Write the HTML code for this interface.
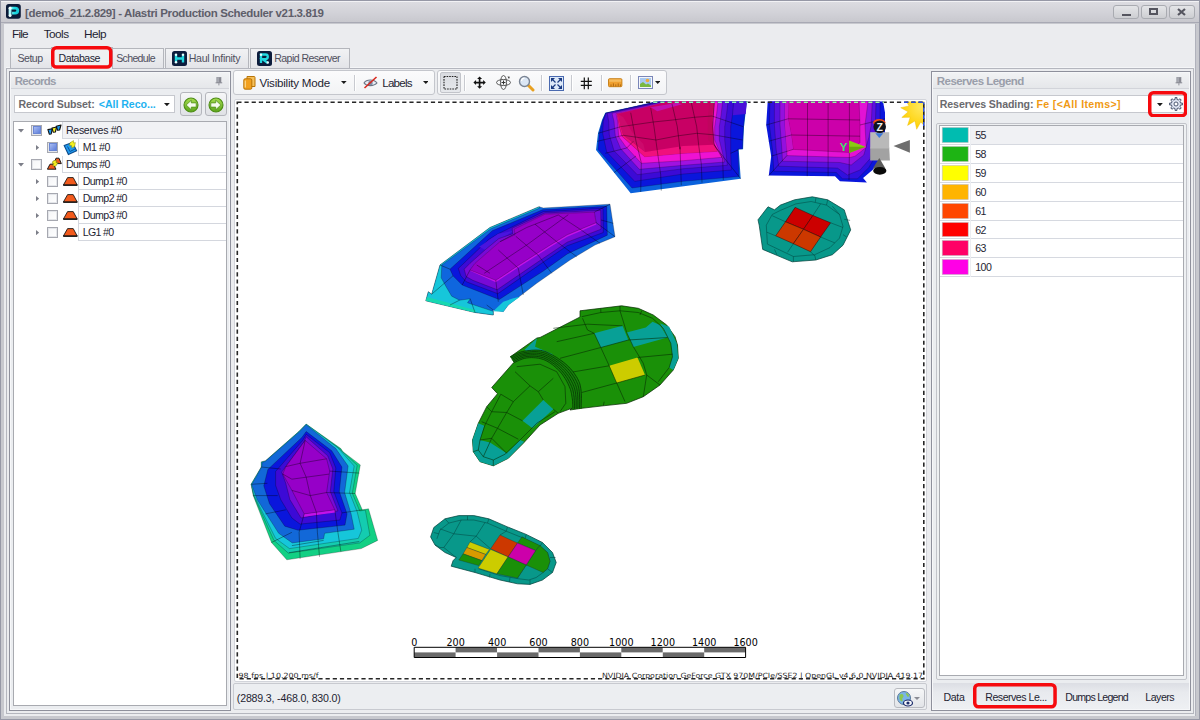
<!DOCTYPE html>
<html lang="en"><head><meta charset="utf-8"><title>Alastri Production Scheduler</title>
<style>
*{box-sizing:border-box;margin:0;padding:0}
html,body{width:1200px;height:720px;overflow:hidden}
body{position:relative;background:#e9ebee;font-family:"Liberation Sans","DejaVu Sans",sans-serif;font-size:11px;color:#1e1e32}
.abs{position:absolute}
#win{position:absolute;left:0;top:0;width:1200px;height:720px;background:#c7c8ce;border:1px solid #9698a6}
#title{position:absolute;left:1px;top:1px;width:1198px;height:22px;background:linear-gradient(#f2f2f5 0,#f2f2f5 1px,#dcdce1 1px,#d2d2d8 55%,#c8c8ce);border-bottom:1px solid #a8a9b4}
#title .t{position:absolute;left:25px;top:4px;font-weight:bold;font-size:11.5px;color:#5e5e6a;letter-spacing:-0.1px;white-space:nowrap}
.wb{position:absolute;top:5px;width:26px;height:14px;border:1px solid #a9abb1;border-radius:3px;background:linear-gradient(#e4e5e8,#cdced2)}
#client{position:absolute;left:4px;top:24px;width:1192px;height:692px;background:#ebecef;border-right:1px solid #b0b2bc}
.menu{position:absolute;top:27px;font-size:12.5px;color:#1e1e32;white-space:nowrap}
.tab{position:absolute;top:48px;height:20px;border:1px solid #b4b6bc;border-bottom:none;background:linear-gradient(#f1f2f4,#e3e4e8);font-size:11px;color:#4a4a5a;white-space:nowrap;letter-spacing:-0.2px}
.tab span{position:absolute;top:4px}
.tab.sel{background:#eef0f2;color:#1e1e32;top:47px;height:22px}
.redbox{position:absolute;border:3px solid #ee0a14;border-radius:6px}
.panel{position:absolute;background:#eceef1;border:1px solid #8e909c}
.panel .in{position:absolute;left:0;top:0;right:0;bottom:0;border:1px solid #f6f7f9;background:#ebedf0}
.cap{position:absolute;font-weight:bold;font-size:11.5px;color:#9a9eaa;white-space:nowrap}
.combo{position:absolute;height:18px;background:#fff;border:1px solid #c6c8ce;font-weight:bold;font-size:11px;white-space:nowrap;color:#6a6a6e;line-height:17px;padding-left:3px}
.white{position:absolute;background:#fff;border:1px solid #a8aab0}
.trow{position:absolute;left:0;height:17px;font-size:11px;color:#1e1e32;white-space:nowrap}
.cell{position:absolute;top:0;height:17px;border-left:1px solid #d4d7de;border-bottom:1px solid #d4d7de;padding-left:3px;line-height:16px}
.cb{position:absolute;width:11px;height:11px;border:1px solid #a6a8b0;background:linear-gradient(135deg,#f4f5f7,#fff);box-shadow:inset 0 0 0 1px #e4e6ea}
.cb.on::after{content:"";position:absolute;left:0.5px;top:0.5px;width:8px;height:8px;box-sizing:border-box;background:linear-gradient(135deg,#a8bcf2,#5e7eda);border:1px solid #6a86d4}
.lrow{position:absolute;left:0;width:242px;height:19px;border-bottom:1px solid #d4d7de;font-size:11px;line-height:18px}
.sw{position:absolute;left:2px;top:1px;width:26px;height:16px;border:1px solid #b8bac0}
.lrow span{position:absolute;left:34px;top:0}
.tb{position:absolute;top:70px;height:25px;background:linear-gradient(#fbfbfc,#f2f3f5);border:1px solid #c4c6cc;border-radius:3px}
.tbt{position:absolute;font-size:12px;color:#1e1e32;white-space:nowrap;letter-spacing:-0.25px}
.sep{position:absolute;top:75px;width:1px;height:16px;background:#c8cad0;box-shadow:1px 0 0 #fff}
.btab{position:absolute;top:690px;font-size:11px;color:#1e1e32;white-space:nowrap;letter-spacing:-0.2px}
</style></head>
<body>
<div id="win"></div>
<div id="title"></div>
<div class="abs" style="left:25.0px;top:4.6px;height:16px;line-height:16px;white-space:nowrap;font-size:11.5px;font-weight:bold;color:#5e5e6a;letter-spacing:-0.35px;">[demo6_21.2.829] - Alastri Production Scheduler v21.3.819</div>
<svg class="abs" style="left:6px;top:4.3px" width="14.8" height="14.8" viewBox="0 0 16 16"><defs><linearGradient id="pg" x1="0" y1="0" x2="1" y2="0"><stop offset="0" stop-color="#b8fbff"/><stop offset="0.5" stop-color="#22e0e6"/><stop offset="1" stop-color="#16c8d8"/></linearGradient></defs><rect x="0" y="0" width="16" height="16" rx="3" fill="#0b1a38"/><path d="M4.4 13V4.4H10a2.7 2.7 0 0 1 0 5.4H6.6" fill="none" stroke="url(#pg)" stroke-width="3.1" stroke-linejoin="round"/><circle cx="4.4" cy="4.6" r="1.5" fill="#f4ffff"/><circle cx="4.4" cy="12.6" r="1.5" fill="#f4ffff"/></svg>
<div class="wb" style="left:1113px"></div>
<div class="wb" style="left:1141px"></div>
<div class="wb" style="left:1169px"></div>
<div class="abs" style="left:1122px;top:14px;width:9px;height:2px;background:#55555f"></div>
<div class="abs" style="left:1149px;top:8px;width:9px;height:7px;border:2px solid #55555f"></div>
<svg class="abs" style="left:1177px;top:8px" width="9" height="8"><path d="M1 1L8 7M8 1L1 7" stroke="#55555f" stroke-width="2.2"/></svg>
<div id="client"></div>
<div class="abs" style="left:12.0px;top:25.6px;height:16px;line-height:16px;white-space:nowrap;font-size:11.8px;color:#1e1e32;letter-spacing:-0.78px;">File</div>
<div class="abs" style="left:43.8px;top:25.6px;height:16px;line-height:16px;white-space:nowrap;font-size:11.8px;color:#1e1e32;letter-spacing:-0.57px;">Tools</div>
<div class="abs" style="left:84.0px;top:25.6px;height:16px;line-height:16px;white-space:nowrap;font-size:11.8px;color:#1e1e32;letter-spacing:-0.57px;">Help</div>
<div class="abs" style="left:6px;top:68px;width:1188px;height:646px;border:1px solid #b4b6be;box-shadow:0 -1px 0 #f4f5f7"></div>
<div class="tab" style="left:10px;width:42px"></div>
<div class="tab" style="left:112px;width:52px"></div>
<div class="tab" style="left:165px;width:84px"></div>
<div class="tab" style="left:250px;width:100px"></div>
<div class="tab sel" style="left:51px;width:62px"></div>
<div class="abs" style="left:17.5px;top:50.4px;height:16px;line-height:16px;white-space:nowrap;font-size:10.6px;color:#50505e;letter-spacing:-0.52px;">Setup</div>
<div class="abs" style="left:58.6px;top:49.6px;height:16px;line-height:16px;white-space:nowrap;font-size:10.6px;color:#1e1e32;letter-spacing:-0.50px;">Database</div>
<div class="abs" style="left:116.2px;top:50.4px;height:16px;line-height:16px;white-space:nowrap;font-size:10.6px;color:#50505e;letter-spacing:-0.68px;">Schedule</div>
<div class="abs" style="left:188.7px;top:50.4px;height:16px;line-height:16px;white-space:nowrap;font-size:10.6px;color:#50505e;letter-spacing:-0.29px;">Haul Infinity</div>
<div class="abs" style="left:274.2px;top:50.4px;height:16px;line-height:16px;white-space:nowrap;font-size:10.6px;color:#50505e;letter-spacing:-0.56px;">Rapid Reserver</div>
<svg class="abs" style="left:172px;top:51px" width="15" height="15" viewBox="0 0 15 15"><rect width="15" height="15" rx="2.5" fill="#0c1c3c"/><path d="M4 3.5v8M11 3.5v8M4 7.5h7" stroke="#22d8e0" stroke-width="2.4" fill="none"/><circle cx="4" cy="3.8" r="1.2" fill="#e8ffff"/><circle cx="11" cy="3.8" r="1.2" fill="#e8ffff"/><circle cx="4" cy="11.2" r="1.2" fill="#e8ffff"/></svg>
<svg class="abs" style="left:257px;top:51px" width="15" height="15" viewBox="0 0 15 15"><rect width="15" height="15" rx="2.5" fill="#0c1c3c"/><path d="M4 12V3.5h4.5a2.3 2.3 0 0 1 0 4.6H5.5L10.8 12" stroke="#22d8e0" stroke-width="2.3" fill="none"/><circle cx="4" cy="3.8" r="1.2" fill="#e8ffff"/><circle cx="10.8" cy="11.5" r="1.2" fill="#e8ffff"/></svg>
<svg class="abs" style="left:51.1px;top:46.1px" width="61.49999999999999" height="22.800000000000004" viewBox="0 0 61.49999999999999 22.800000000000004"><rect x="1.75" y="1.75" width="57.99999999999999" height="19.300000000000004" rx="3.6500000000000004" fill="none" stroke="#f60a0e" stroke-width="3.5"/></svg>
<div class="panel" style="left:9px;top:71px;width:222px;height:640px"><div class="in"></div></div>
<div class="abs" style="left:11px;top:73px;width:218px;height:16px;background:linear-gradient(#f1f2f4,#e5e7ea);border-bottom:1px solid #d2d4da"></div>
<div class="abs" style="left:14.8px;top:73.2px;height:16px;line-height:16px;white-space:nowrap;font-size:11.5px;font-weight:bold;color:#9a9eaa;letter-spacing:-0.75px;">Records</div>
<svg class="abs" style="left:215px;top:76.5px" width="8" height="9" viewBox="0 0 8 9"><rect x="1.8" y="0.4" width="4.2" height="5" fill="#a6a8b0" stroke="#8c8e98" stroke-width="0.6"/><rect x="4.2" y="0.6" width="1.6" height="4.6" fill="#84868e"/><path d="M0.6 5.8H7.2" stroke="#85878f" stroke-width="1"/><path d="M3.9 6.2V8.4" stroke="#85878f" stroke-width="0.9"/></svg>
<div class="combo" style="left:14px;top:95px;width:161px"></div>
<div class="abs" style="left:18.5px;top:96.3px;height:16px;line-height:16px;white-space:nowrap;font-size:10.6px;font-weight:bold;color:#6a6a6e;letter-spacing:-0.16px;">Record Subset:</div>
<div class="abs" style="left:98.8px;top:96.3px;height:16px;line-height:16px;white-space:nowrap;font-size:10.6px;font-weight:bold;color:#1eb2f0;letter-spacing:-0.04px;">&lt;All Reco...</div>
<svg class="abs" style="left:164px;top:102.5px" width="5.8" height="3.2"><polygon points="0,0 5.8,0 2.9,3.2" fill="#1a1a1a"/></svg>
<div class="abs" style="left:180px;top:92px;width:22px;height:24px;border:1px solid #b4b6bc;border-radius:3px;background:linear-gradient(#f6f7f8,#dfe1e5)"></div>
<div class="abs" style="left:205px;top:92px;width:22px;height:24px;border:1px solid #b4b6bc;border-radius:3px;background:linear-gradient(#f6f7f8,#dfe1e5)"></div>
<svg class="abs" style="left:183px;top:96.6px" width="16" height="16" viewBox="0 0 16 16"><defs><linearGradient id="gg1" x1="0" y1="0" x2="0" y2="1"><stop offset="0" stop-color="#a6dc50"/><stop offset="1" stop-color="#5ca61a"/></linearGradient></defs><circle cx="8" cy="8" r="7" fill="url(#gg1)" stroke="#4c8c14" stroke-width="1.1"/><path d="M3.2 8L8.3 3.2V5.9H13.2V10.1H8.3V12.8z" fill="#f6fcec" stroke="#4a8a16" stroke-width="0.7" stroke-linejoin="round"/></svg>
<svg class="abs" style="left:208px;top:96.6px" width="16" height="16" viewBox="0 0 16 16"><defs><linearGradient id="gg0" x1="0" y1="0" x2="0" y2="1"><stop offset="0" stop-color="#a6dc50"/><stop offset="1" stop-color="#5ca61a"/></linearGradient></defs><circle cx="8" cy="8" r="7" fill="url(#gg0)" stroke="#4c8c14" stroke-width="1.1"/><path d="M12.8 8L7.7 3.2V5.9H2.8V10.1H7.7V12.8z" fill="#f6fcec" stroke="#4a8a16" stroke-width="0.7" stroke-linejoin="round"/></svg>
<div class="white" style="left:13px;top:121px;width:214px;height:585px"></div>
<div class="trow" style="top:122px;left:0;width:226px">
<div class="cell" style="left:62px;width:164px;background:#f1f2f5;"></div>
<div class="cb on" style="left:31px;top:2.5px"></div>
<svg class="abs" style="left:47px;top:0px" width="16" height="15" viewBox="0 0 16 15"><polygon points="9.2,4.2 14,3 12.6,8 10.6,8.2" fill="#1e9af0" stroke="#111" stroke-width="1.1" stroke-linejoin="round"/><polygon points="0.9,7.6 5.2,6.8 4.2,12 2.3,12.2" fill="#1e9af0" stroke="#111" stroke-width="1.1" stroke-linejoin="round"/><polygon points="5,6 9.6,5 8.4,10 6.2,10.2" fill="#f4f01e" stroke="#111" stroke-width="1.1" stroke-linejoin="round"/></svg>
<svg class="abs" style="left:18.2px;top:7.2px" width="6" height="3.4"><polygon points="0,0 6,0 3.0,3.4" fill="#7c7e88"/></svg>
</div>
<div class="abs" style="left:66.0px;top:122.4px;height:16px;line-height:16px;white-space:nowrap;font-size:10.6px;color:#1e1e32;letter-spacing:-0.33px;">Reserves #0</div>
<div class="trow" style="top:139px;left:0;width:226px">
<div class="cell" style="left:78px;width:148px;"></div>
<div class="cb on" style="left:47px;top:2.5px"></div>
<svg class="abs" style="left:63px;top:1px" width="16" height="16" viewBox="0 0 16 16"><polygon points="1.2,5.6 9.5,2.4 13.6,10.8 5.4,14.6" fill="#1e9af0" stroke="#0c4a8a" stroke-width="1.1"/><polygon points="7,2.8 10.5,0.6 10.6,3 12.4,2.6 11.6,6.4 8.8,8 8.6,5.6 6.6,5.6" fill="#f4f01e" stroke="#8a8a10" stroke-width="0.5"/><path d="M4.5 6.5l3 5.5M8 11l4-2" stroke="#0c4a8a" stroke-width="0.9"/></svg>
<svg class="abs" style="left:36.2px;top:5.8px" width="3.2" height="5.2"><polygon points="0,0 3.2,2.6 0,5.2" fill="#7c7e88"/></svg>
</div>
<div class="abs" style="left:82.7px;top:139.4px;height:16px;line-height:16px;white-space:nowrap;font-size:10.6px;color:#1e1e32;letter-spacing:-0.45px;">M1 #0</div>
<div class="trow" style="top:156px;left:0;width:226px">
<div class="cell" style="left:62px;width:164px;"></div>
<div class="cb" style="left:31px;top:2.5px"></div>
<svg class="abs" style="left:47px;top:1px" width="16" height="15" viewBox="0 0 16 15"><polygon points="9,1.2 12,1.2 14.3,6.6 7,6.6" fill="#f25a1c" stroke="#1a1a1a" stroke-width="1"/><polygon points="3,7.2 6.2,7.2 9,12.2 0.4,12.2" fill="#f25a1c" stroke="#1a1a1a" stroke-width="1"/><polygon points="6,4 9.5,3 9,5.6 11.2,5.2 8.6,9.4 5.4,8.6 7,6.4 5,6.4" fill="#f4f01e" stroke="#6a6a10" stroke-width="0.5"/></svg>
<svg class="abs" style="left:18.2px;top:7.2px" width="6" height="3.4"><polygon points="0,0 6,0 3.0,3.4" fill="#7c7e88"/></svg>
</div>
<div class="abs" style="left:66.0px;top:156.4px;height:16px;line-height:16px;white-space:nowrap;font-size:10.6px;color:#1e1e32;letter-spacing:-0.55px;">Dumps #0</div>
<div class="trow" style="top:173px;left:0;width:226px">
<div class="cell" style="left:78px;width:148px;"></div>
<div class="cb" style="left:47px;top:2.5px"></div>
<svg class="abs" style="left:63px;top:3px" width="16" height="12" viewBox="0 0 16 12"><polygon points="4.6,1.6 10.2,1.6 14.2,9 0.4,9" fill="#f25a1c" stroke="#1a1a1a" stroke-width="0.9" stroke-linejoin="round"/><path d="M0.2 9.2H14.4" stroke="#111" stroke-width="1.3"/></svg>
<svg class="abs" style="left:36.2px;top:5.8px" width="3.2" height="5.2"><polygon points="0,0 3.2,2.6 0,5.2" fill="#7c7e88"/></svg>
</div>
<div class="abs" style="left:82.7px;top:173.4px;height:16px;line-height:16px;white-space:nowrap;font-size:10.6px;color:#1e1e32;letter-spacing:-0.58px;">Dump1 #0</div>
<div class="trow" style="top:190px;left:0;width:226px">
<div class="cell" style="left:78px;width:148px;"></div>
<div class="cb" style="left:47px;top:2.5px"></div>
<svg class="abs" style="left:63px;top:3px" width="16" height="12" viewBox="0 0 16 12"><polygon points="4.6,1.6 10.2,1.6 14.2,9 0.4,9" fill="#f25a1c" stroke="#1a1a1a" stroke-width="0.9" stroke-linejoin="round"/><path d="M0.2 9.2H14.4" stroke="#111" stroke-width="1.3"/></svg>
<svg class="abs" style="left:36.2px;top:5.8px" width="3.2" height="5.2"><polygon points="0,0 3.2,2.6 0,5.2" fill="#7c7e88"/></svg>
</div>
<div class="abs" style="left:82.7px;top:190.4px;height:16px;line-height:16px;white-space:nowrap;font-size:10.6px;color:#1e1e32;letter-spacing:-0.58px;">Dump2 #0</div>
<div class="trow" style="top:207px;left:0;width:226px">
<div class="cell" style="left:78px;width:148px;"></div>
<div class="cb" style="left:47px;top:2.5px"></div>
<svg class="abs" style="left:63px;top:3px" width="16" height="12" viewBox="0 0 16 12"><polygon points="4.6,1.6 10.2,1.6 14.2,9 0.4,9" fill="#f25a1c" stroke="#1a1a1a" stroke-width="0.9" stroke-linejoin="round"/><path d="M0.2 9.2H14.4" stroke="#111" stroke-width="1.3"/></svg>
<svg class="abs" style="left:36.2px;top:5.8px" width="3.2" height="5.2"><polygon points="0,0 3.2,2.6 0,5.2" fill="#7c7e88"/></svg>
</div>
<div class="abs" style="left:82.7px;top:207.4px;height:16px;line-height:16px;white-space:nowrap;font-size:10.6px;color:#1e1e32;letter-spacing:-0.58px;">Dump3 #0</div>
<div class="trow" style="top:224px;left:0;width:226px">
<div class="cell" style="left:78px;width:148px;"></div>
<div class="cb" style="left:47px;top:2.5px"></div>
<svg class="abs" style="left:63px;top:3px" width="16" height="12" viewBox="0 0 16 12"><polygon points="4.6,1.6 10.2,1.6 14.2,9 0.4,9" fill="#f25a1c" stroke="#1a1a1a" stroke-width="0.9" stroke-linejoin="round"/><path d="M0.2 9.2H14.4" stroke="#111" stroke-width="1.3"/></svg>
<svg class="abs" style="left:36.2px;top:5.8px" width="3.2" height="5.2"><polygon points="0,0 3.2,2.6 0,5.2" fill="#7c7e88"/></svg>
</div>
<div class="abs" style="left:82.7px;top:224.4px;height:16px;line-height:16px;white-space:nowrap;font-size:10.6px;color:#1e1e32;letter-spacing:-0.65px;">LG1 #0</div>
<div class="tb" style="left:233px;width:202px"></div>
<div class="tb" style="left:437px;width:230px"></div>
<svg class="abs" style="left:243px;top:75px" width="13" height="15" viewBox="0 0 13 15"><path d="M4 1.5h7a1 1 0 0 1 1 1v9h-8z" fill="#f6c05a" stroke="#b87408" stroke-width="1"/><rect x="0.8" y="3.8" width="8" height="10.4" rx="1.3" fill="#f2a01e" stroke="#b87408" stroke-width="1"/><path d="M2.3 5.5v7" stroke="#fbd88c" stroke-width="1.2"/></svg>
<div class="abs" style="left:259.4px;top:74.6px;height:16px;line-height:16px;white-space:nowrap;font-size:11.6px;color:#1e1e32;letter-spacing:-0.22px;">Visibility Mode</div>
<svg class="abs" style="left:341px;top:81px" width="5.6" height="3"><polygon points="0,0 5.6,0 2.8,3" fill="#1a1a1a"/></svg>
<div class="sep" style="left:354px"></div>
<svg class="abs" style="left:363px;top:75px" width="15" height="15" viewBox="0 0 15 15"><path d="M1 8C3.5 4 11 4 14 8C11 11.5 3.5 11.5 1 8z" fill="#e8ecf4" stroke="#6a7484" stroke-width="1.1"/><circle cx="7.5" cy="8" r="2.3" fill="#7e8ea8"/><path d="M1.5 13L13.5 2" stroke="#d8281e" stroke-width="1.6"/></svg>
<div class="abs" style="left:382.3px;top:74.6px;height:16px;line-height:16px;white-space:nowrap;font-size:11.6px;color:#1e1e32;letter-spacing:-0.80px;">Labels</div>
<svg class="abs" style="left:422.6px;top:81px" width="5.6" height="3"><polygon points="0,0 5.6,0 2.8,3" fill="#1a1a1a"/></svg>
<div class="abs" style="left:440px;top:72px;width:21px;height:21px;background:linear-gradient(#d9dbe0,#e6e8ec);border:1px solid #c2c4ca;border-radius:2px"></div>
<svg class="abs" style="left:443px;top:75px" width="16" height="16"><rect x="1" y="1.5" width="13" height="12.5" fill="none" stroke="#222" stroke-width="1.1" stroke-dasharray="1.6 1"/></svg>
<div class="sep" style="left:464px"></div>
<svg class="abs" style="left:473.2px;top:76.4px" width="13.2" height="13.2" viewBox="0 0 16 16"><path d="M8 0.5l3 3.2H9v3.3h3.3V5l3.2 3-3.2 3V9H9v3.3h2L8 15.5l-3-3.2h2V9H3.7v2L0.5 8l3.2-3v2H7V3.7H5z" fill="#111"/></svg>
<svg class="abs" style="left:495px;top:74px" width="17" height="17" viewBox="0 0 17 17"><ellipse cx="8.5" cy="8.5" rx="3" ry="7" fill="none" stroke="#555" stroke-width="1"/><ellipse cx="8.5" cy="8.5" rx="7" ry="3" fill="none" stroke="#555" stroke-width="1"/><path d="M8.5 6.5v4M6.5 8.5h4" stroke="#333" stroke-width="1"/><path d="M12.5 2.5l2.3 0.2-0.8 2.2z" fill="#333"/></svg>
<svg class="abs" style="left:518px;top:75px" width="17" height="17" viewBox="0 0 17 17"><path d="M10 10l5 5" stroke="#e8a020" stroke-width="3" stroke-linecap="round"/><circle cx="6.5" cy="6.5" r="5" fill="#dbe6f4" stroke="#7a8494" stroke-width="1.4"/><path d="M3.5 6a3 3 0 0 1 3-2.8" stroke="#fff" stroke-width="1.2" fill="none"/></svg>
<div class="sep" style="left:541px"></div>
<svg class="abs" style="left:549px;top:76px" width="15" height="15" viewBox="0 0 15 15"><rect x="0.5" y="0.5" width="14" height="14" fill="#dce8f8" stroke="#4a6ab0" stroke-width="1"/><path d="M2 2h4L2 6zM13 2v4L9 2zM2 13V9l4 4zM13 13H9l4-4z" fill="#1a3a80"/><path d="M3 3l3.5 3.5M12 3L8.5 6.5M3 12l3.5-3.5M12 12L8.5 8.5" stroke="#1a3a80" stroke-width="1.2"/></svg>
<div class="sep" style="left:571px"></div>
<svg class="abs" style="left:579px;top:76px" width="15" height="15" viewBox="0 0 15 15"><path d="M5.3 1.6v11.6M9.3 1.6v11.6M1.8 5.4h11M1.8 9.4h11" stroke="#111" stroke-width="1.2"/></svg>
<div class="sep" style="left:601px"></div>
<svg class="abs" style="left:608px;top:78px" width="15" height="10" viewBox="0 0 15 10"><rect x="0.5" y="0.7" width="13.4" height="8" rx="1" fill="#f0a030" stroke="#c47a10" stroke-width="0.9"/><rect x="1.2" y="1.4" width="12" height="2.4" fill="#f6bc5e"/><path d="M3 8.4V6.4M5.4 8.4V5.4M7.8 8.4V6.4M10.2 8.4V5.4M12.4 8.4V6.4" stroke="#a05a08" stroke-width="0.8"/></svg>
<div class="sep" style="left:630px"></div>
<svg class="abs" style="left:638px;top:76px" width="15" height="13" viewBox="0 0 15 13"><rect x="0.5" y="0.5" width="14" height="12" fill="#f4f6fa" stroke="#7a86b8" stroke-width="1"/><rect x="2" y="2" width="11" height="9" fill="#a8c8f0"/><path d="M2 11V8l3-2 3 2.5 2-1 3 2V11z" fill="#7ab840"/><circle cx="9.5" cy="4.5" r="1.8" fill="#f0a838"/></svg>
<svg class="abs" style="left:655px;top:81px" width="5.4" height="3"><polygon points="0,0 5.4,0 2.7,3" fill="#1a1a1a"/></svg>
<div class="abs" style="left:234px;top:99px;width:693px;height:583px;background:#fff;border:1px solid #d2d4da;border-radius:2px"></div>
<div class="abs" style="left:233px;top:683px;width:694px;height:27px;background:#eceef1;border:1px solid #c8cad0;border-radius:2px"></div>
<div class="abs" style="left:236.8px;top:689.6px;height:16px;line-height:16px;white-space:nowrap;font-size:10.6px;color:#1e1e32;letter-spacing:-0.17px;">(2889.3, -468.0, 830.0)</div>
<div class="abs" style="left:894px;top:688px;width:31px;height:20px;border:1px solid #b8bac0;border-radius:3px;background:linear-gradient(#f6f7f8,#e2e4e8)"></div>
<svg class="abs" style="left:896px;top:690px" width="18" height="18" viewBox="0 0 18 18"><circle cx="8" cy="8" r="6.5" fill="#7ab4e8" stroke="#5a7a9a" stroke-width="1"/><path d="M3.5 5c2-2 4-1 4 1s-2 2-1 4-2 2-3-1z" fill="#8ac850"/><path d="M10 3c2 0 3 2 3 3s-2 1-2 0-2-2-1-3z" fill="#8ac850"/><ellipse cx="12" cy="13" rx="4.5" ry="3" fill="#f4f6fa" stroke="#1a2a6a" stroke-width="1.2"/><circle cx="12" cy="13" r="1.6" fill="#1a2a6a"/></svg>
<svg class="abs" style="left:914px;top:697px" width="6" height="3"><polygon points="0,0 6,0 3.0,3" fill="#8a8c94"/></svg>
<div class="panel" style="left:931px;top:71px;width:260px;height:640px"><div class="in"></div></div>
<div class="abs" style="left:933px;top:73px;width:256px;height:16px;background:linear-gradient(#f1f2f4,#e5e7ea);border-bottom:1px solid #d2d4da"></div>
<div class="abs" style="left:936.8px;top:73.2px;height:16px;line-height:16px;white-space:nowrap;font-size:11.5px;font-weight:bold;color:#9a9eaa;letter-spacing:-0.55px;">Reserves Legend</div>
<svg class="abs" style="left:1175px;top:76.5px" width="8" height="9" viewBox="0 0 8 9"><rect x="1.8" y="0.4" width="4.2" height="5" fill="#a6a8b0" stroke="#8c8e98" stroke-width="0.6"/><rect x="4.2" y="0.6" width="1.6" height="4.6" fill="#84868e"/><path d="M0.6 5.8H7.2" stroke="#85878f" stroke-width="1"/><path d="M3.9 6.2V8.4" stroke="#85878f" stroke-width="0.9"/></svg>
<div class="combo" style="left:937px;top:95px;width:250px"></div>
<div class="abs" style="left:939.8px;top:96.3px;height:16px;line-height:16px;white-space:nowrap;font-size:10.6px;font-weight:bold;color:#6a6a6e;letter-spacing:-0.11px;">Reserves Shading:</div>
<div class="abs" style="left:1036.5px;top:96.3px;height:16px;line-height:16px;white-space:nowrap;font-size:10.6px;font-weight:bold;color:#f09a14;letter-spacing:0.35px;">Fe [&lt;All Items&gt;]</div>
<svg class="abs" style="left:1157px;top:102.5px" width="5.8" height="3.3"><polygon points="0,0 5.8,0 2.9,3.3" fill="#1a1a1a"/></svg>
<svg class="abs" style="left:1167.6px;top:96.4px" width="16" height="16" viewBox="0 0 16 16"><polygon points="14.4,7.0 14.4,9.0 12.6,8.9 11.9,10.6 13.3,11.8 11.8,13.3 10.6,11.9 8.9,12.6 9.0,14.4 7.0,14.4 7.1,12.6 5.4,11.9 4.2,13.3 2.7,11.8 4.1,10.6 3.4,8.9 1.6,9.0 1.6,7.0 3.4,7.1 4.1,5.4 2.7,4.2 4.2,2.7 5.4,4.1 7.1,3.4 7.0,1.6 9.0,1.6 8.9,3.4 10.6,4.1 11.8,2.7 13.3,4.2 11.9,5.4 12.6,7.1" fill="#dfe5f2" stroke="#3c4864" stroke-width="0.9" stroke-linejoin="round"/><circle cx="8" cy="8" r="2" fill="#fff" stroke="#3c4864" stroke-width="0.9"/></svg>
<svg class="abs" style="left:1147.9px;top:90.8px" width="39.399999999999864" height="26.400000000000006" viewBox="0 0 39.399999999999864 26.400000000000006"><rect x="1.75" y="1.75" width="35.899999999999864" height="22.900000000000006" rx="3.6500000000000004" fill="none" stroke="#f60a0e" stroke-width="3.5"/></svg>
<div class="abs" style="left:936px;top:123px;width:251px;height:557px;border:1px solid #c2c4ca;background:#eef0f2;border-radius:2px"></div>
<div class="white" style="left:939px;top:125px;width:245px;height:551px"></div>
<div class="abs" style="left:971px;top:126px;width:212px;height:18px;background:#f0f1f4"></div>
<div class="abs" style="left:940px;top:144px;width:243px;height:1px;background:#d6d9e0"></div>
<div class="abs" style="left:975.2px;top:127.2px;height:16px;line-height:16px;white-space:nowrap;font-size:10.6px;color:#1e1e32;letter-spacing:-0.70px;">55</div>
<div class="abs" style="left:940px;top:163px;width:243px;height:1px;background:#d6d9e0"></div>
<div class="abs" style="left:975.2px;top:146.2px;height:16px;line-height:16px;white-space:nowrap;font-size:10.6px;color:#1e1e32;letter-spacing:-0.70px;">58</div>
<div class="abs" style="left:940px;top:182px;width:243px;height:1px;background:#d6d9e0"></div>
<div class="abs" style="left:975.2px;top:165.2px;height:16px;line-height:16px;white-space:nowrap;font-size:10.6px;color:#1e1e32;letter-spacing:-0.70px;">59</div>
<div class="abs" style="left:940px;top:201px;width:243px;height:1px;background:#d6d9e0"></div>
<div class="abs" style="left:975.2px;top:184.2px;height:16px;line-height:16px;white-space:nowrap;font-size:10.6px;color:#1e1e32;letter-spacing:-0.70px;">60</div>
<div class="abs" style="left:940px;top:220px;width:243px;height:1px;background:#d6d9e0"></div>
<div class="abs" style="left:975.2px;top:203.2px;height:16px;line-height:16px;white-space:nowrap;font-size:10.6px;color:#1e1e32;letter-spacing:-0.70px;">61</div>
<div class="abs" style="left:940px;top:238px;width:243px;height:1px;background:#d6d9e0"></div>
<div class="abs" style="left:975.2px;top:221.7px;height:16px;line-height:16px;white-space:nowrap;font-size:10.6px;color:#1e1e32;letter-spacing:-0.70px;">62</div>
<div class="abs" style="left:940px;top:257px;width:243px;height:1px;background:#d6d9e0"></div>
<div class="abs" style="left:975.2px;top:240.2px;height:16px;line-height:16px;white-space:nowrap;font-size:10.6px;color:#1e1e32;letter-spacing:-0.70px;">63</div>
<div class="abs" style="left:940px;top:276px;width:243px;height:1px;background:#d6d9e0"></div>
<div class="abs" style="left:975.2px;top:259.2px;height:16px;line-height:16px;white-space:nowrap;font-size:10.6px;color:#1e1e32;letter-spacing:-0.50px;">100</div>
<div class="abs" style="left:970px;top:126px;width:1px;height:151px;background:#eceef2"></div>
<svg class="abs" style="left:0;top:0" width="1200" height="300" viewBox="0 0 1200 300"><rect x="942.2" y="127.4" width="26" height="15.2" fill="#00bcb0" stroke="#c6c0c4" stroke-width="0.6"/><rect x="942.2" y="146.4" width="26" height="15.2" fill="#1eb414" stroke="#c6c0c4" stroke-width="0.6"/><rect x="942.2" y="165.4" width="26" height="15.2" fill="#ffff00" stroke="#c6c0c4" stroke-width="0.6"/><rect x="942.2" y="184.4" width="26" height="15.2" fill="#ffb400" stroke="#c6c0c4" stroke-width="0.6"/><rect x="942.2" y="203.4" width="26" height="15.2" fill="#ff4600" stroke="#c6c0c4" stroke-width="0.6"/><rect x="942.2" y="222.4" width="26" height="14.2" fill="#ff0000" stroke="#c6c0c4" stroke-width="0.6"/><rect x="942.2" y="240.4" width="26" height="15.2" fill="#ff0066" stroke="#c6c0c4" stroke-width="0.6"/><rect x="942.2" y="259.4" width="26" height="15.2" fill="#ff00e6" stroke="#c6c0c4" stroke-width="0.6"/></svg>
<div class="abs" style="left:933px;top:683px;width:256px;height:26px;background:linear-gradient(#dcdee4,#e8eaee 35%,#eef0f3)"></div>
<div class="abs" style="left:943.6px;top:688.6px;height:16px;line-height:16px;white-space:nowrap;font-size:10.6px;color:#1e1e32;letter-spacing:-0.40px;">Data</div>
<div class="abs" style="left:985.3px;top:688.6px;height:16px;line-height:16px;white-space:nowrap;font-size:10.6px;color:#1e1e32;letter-spacing:-0.50px;">Reserves Le...</div>
<div class="abs" style="left:1065.3px;top:688.6px;height:16px;line-height:16px;white-space:nowrap;font-size:10.6px;color:#1e1e32;letter-spacing:-0.77px;">Dumps Legend</div>
<div class="abs" style="left:1145.3px;top:688.6px;height:16px;line-height:16px;white-space:nowrap;font-size:10.6px;color:#1e1e32;letter-spacing:-0.50px;">Layers</div>
<svg class="abs" style="left:973.2px;top:683.1px" width="83.79999999999995" height="25.5" viewBox="0 0 83.79999999999995 25.5"><rect x="1.75" y="1.75" width="80.29999999999995" height="22.0" rx="3.6500000000000004" fill="none" stroke="#f60a0e" stroke-width="3.5"/></svg>
<svg class="abs" style="left:0;top:0" width="1200" height="720" viewBox="0 0 1200 720"><defs><clipPath id="vpc2"><rect x="236.5" y="101.5" width="688" height="578"/></clipPath></defs>
<g clip-path="url(#vpc2)">
<polygon points="596.0,150.0 598.0,133.3 602.0,120.0 605.3,112.7 650.7,102.9 700.0,90.0 747.6,94.7 744.0,126.7 743.3,140.0 743.1,149.3 738.7,149.6 740.7,178.7 630.7,193.3" fill="#0b62dc" stroke-linejoin="round"/>
<polygon points="598.0,149.6 599.3,133.3 602.7,120.0 605.7,112.9 652.0,102.6 700.0,92.0 746.9,94.7 743.5,126.7 742.8,140.0 742.4,148.8 738.0,149.1 738.9,176.5 683.3,181.3 632.0,188.0" fill="#0a16dc" stroke="#000" stroke-width="0.5" stroke-opacity="0.4" stroke-linejoin="round"/>
<polygon points="734.0,94.7 747.6,94.7 745.7,114.0 732.7,115.3" fill="#4a10d8" stroke-linejoin="round"/>
<polygon points="606.7,152.0 602.7,133.3 603.3,121.3 606.0,113.2 653.0,103.0 700.0,92.0 734.0,94.7 732.7,113.3 730.7,126.7 730.7,153.3 731.3,170.0 683.3,174.0 634.7,181.3" fill="#3c0ad6" stroke="#000" stroke-width="0.5" stroke-opacity="0.4" stroke-linejoin="round"/>
<polygon points="614.0,150.7 609.3,134.7 608.7,121.3 607.3,113.3 654.0,103.5 700.0,92.0 728.7,94.7 726.7,113.3 724.7,126.7 724.7,140.0 727.3,165.3 683.3,168.7 637.3,174.7" fill="#5c10de" stroke="#000" stroke-width="0.5" stroke-opacity="0.4" stroke-linejoin="round"/>
<polygon points="620.7,148.7 615.3,136.0 614.0,121.3 612.0,113.3 655.0,103.9 700.0,92.0 723.3,94.7 721.3,113.3 719.3,126.7 719.3,140.0 724.7,162.0 683.3,165.3 639.3,169.3" fill="#a012e0" stroke="#000" stroke-width="0.5" stroke-opacity="0.4" stroke-linejoin="round"/>
<polygon points="625.3,146.0 618.7,136.7 617.6,121.3 616.0,113.6 657.0,104.8 700.0,92.0 718.7,94.7 716.7,113.3 714.7,126.7 714.7,140.0 722.0,157.3 683.3,160.7 641.3,163.3" fill="#ee12d2" stroke="#000" stroke-width="0.5" stroke-opacity="0.4" stroke-linejoin="round"/>
<polygon points="644.7,156.7 622.0,136.3 619.3,126.7 617.1,113.9 659.0,105.8 700.0,92.0 715.3,94.7 712.9,120.0 712.7,126.7 713.7,142.7 717.3,151.3 683.3,153.3 644.7,156.7" fill="#f0107c" stroke="#000" stroke-width="0.5" stroke-opacity="0.4" stroke-linejoin="round"/>
<polygon points="623.3,135.3 645.3,152.0 683.3,146.0 713.3,144.7 717.3,151.3 683.3,153.3 644.7,156.7" fill="#f0107c" stroke-linejoin="round"/>
<polygon points="618.0,114.0 620.7,126.7 623.3,135.3 645.3,152.0 683.3,146.0 713.3,144.7 712.0,120.0 714.0,94.7 700.0,92.0 662.0,103.0" fill="#c80064" stroke-linejoin="round"/>
<polygon points="618.0,114.0 620.7,126.7 623.3,135.3 645.3,152.0 643.3,144.0 632.0,132.0 623.3,117.3" fill="#cc0a6c" stroke-linejoin="round"/>
<polygon points="714.0,94.7 712.0,120.0 713.3,144.7 708.0,140.0 707.6,120.0 710.0,94.7" fill="#c0045e" stroke-linejoin="round"/>
<polygon points="650.7,107.3 657.3,111.3 682.0,104.3 677.3,102.7" fill="#c010b0" stroke-linejoin="round"/>
<polyline points="630.7,112.7 633.3,126.7 636.0,141.3 641.3,162.7 640.7,192.0" fill="none" stroke="#000" stroke-width="0.6" stroke-opacity="0.6"/>
<polyline points="650.7,108.0 654.0,126.7 657.3,150.7 660.7,174.7 661.3,190.7" fill="none" stroke="#000" stroke-width="0.6" stroke-opacity="0.6"/>
<polyline points="672.0,104.0 677.3,126.7 680.0,149.3 680.0,146.7 681.3,185.3" fill="none" stroke="#000" stroke-width="0.6" stroke-opacity="0.6"/>
<polyline points="691.3,102.7 696.7,126.7 698.7,145.3 701.3,164.0 702.0,182.7" fill="none" stroke="#000" stroke-width="0.6" stroke-opacity="0.6"/>
<polyline points="714.0,102.7 712.7,126.7 714.0,144.0 722.7,158.7 723.3,180.0" fill="none" stroke="#000" stroke-width="0.6" stroke-opacity="0.6"/>
<polyline points="598.0,133.3 620.7,126.7 653.3,122.0 672.7,120.0 694.0,117.3 712.0,116.0 743.3,126.7" fill="none" stroke="#000" stroke-width="0.6" stroke-opacity="0.6"/>
<polyline points="597.3,141.3 623.3,135.3 656.0,140.0 676.7,136.0 696.7,133.3 712.7,134.7 742.7,140.0" fill="none" stroke="#000" stroke-width="0.6" stroke-opacity="0.6"/>
<polyline points="605.3,153.3 626.7,148.0 633.3,141.3" fill="none" stroke="#000" stroke-width="0.6" stroke-opacity="0.6"/>
<polyline points="614.0,172.7 636.0,156.0" fill="none" stroke="#000" stroke-width="0.6" stroke-opacity="0.6"/>
<polyline points="713.7,144.7 740.7,178.7" fill="none" stroke="#000" stroke-width="0.6" stroke-opacity="0.6"/>
<polyline points="730.7,153.3 738.7,149.6" fill="none" stroke="#000" stroke-width="0.6" stroke-opacity="0.6"/>
</g>
<g clip-path="url(#vpc2)">
<polygon points="768.1,95.0 766.2,125.0 768.8,141.2 771.2,156.2 768.8,175.6 835.0,176.2 840.0,181.2 866.9,182.5 863.1,178.1 872.5,170.0 880.0,160.0 885.0,137.5 885.0,112.5 881.9,95.0" fill="#0a16dc" stroke-linejoin="round"/>
<polygon points="770.0,95.0 769.4,125.0 772.5,150.0 773.8,171.2 836.2,172.5 842.5,178.8 857.5,178.8 868.8,167.5 876.2,155.0 880.0,137.5 880.0,95.0" fill="#3010de" stroke="#000" stroke-width="0.5" stroke-opacity="0.4" stroke-linejoin="round"/>
<polygon points="774.4,95.0 774.4,125.0 776.2,150.0 778.8,166.2 837.5,168.1 847.5,175.0 860.0,170.0 870.0,158.8 875.0,137.5 876.2,95.0" fill="#5a10de" stroke="#000" stroke-width="0.5" stroke-opacity="0.4" stroke-linejoin="round"/>
<polygon points="780.0,95.0 780.0,125.0 781.9,150.0 782.5,161.2 840.0,162.5 851.2,165.0 863.8,155.0 868.8,137.5 871.2,125.0 872.5,95.0" fill="#9410de" stroke="#000" stroke-width="0.5" stroke-opacity="0.4" stroke-linejoin="round"/>
<polygon points="785.0,95.0 785.0,125.0 786.9,150.0 786.9,155.6 850.0,157.5 855.0,156.2 866.2,147.5 865.0,125.0 868.8,95.0" fill="#e412d4" stroke="#000" stroke-width="0.5" stroke-opacity="0.4" stroke-linejoin="round"/>
<polygon points="788.8,95.0 788.1,118.8 791.2,135.0 793.1,149.4 850.0,152.5 860.0,142.5 860.0,125.0 858.8,95.0" fill="#cc00aa" stroke="#000" stroke-width="0.5" stroke-opacity="0.4" stroke-linejoin="round"/>
<polygon points="785.0,95.0 785.0,125.0 786.9,150.0 793.1,149.4 791.2,135.0 788.1,118.8 788.8,95.0" fill="#c410c8" stroke-linejoin="round"/>
<polyline points="807.5,100.0 807.5,150.0 807.2,176.2" fill="none" stroke="#000" stroke-width="0.6" stroke-opacity="0.6"/>
<polyline points="828.1,100.0 828.1,151.2 828.1,176.2" fill="none" stroke="#000" stroke-width="0.6" stroke-opacity="0.6"/>
<polyline points="849.4,100.0 849.4,152.5 849.0,180.0" fill="none" stroke="#000" stroke-width="0.6" stroke-opacity="0.6"/>
<polyline points="766.2,125.0 788.1,118.8 860.0,120.0" fill="none" stroke="#000" stroke-width="0.6" stroke-opacity="0.6"/>
<polyline points="768.8,141.2 791.2,135.0 860.0,136.2" fill="none" stroke="#000" stroke-width="0.6" stroke-opacity="0.6"/>
<polyline points="771.2,156.2 793.1,149.4" fill="none" stroke="#000" stroke-width="0.6" stroke-opacity="0.6"/>
<polyline points="786.9,155.6 768.8,175.6" fill="none" stroke="#000" stroke-width="0.6" stroke-opacity="0.6"/>
<polyline points="860.0,125.0 885.0,118.8" fill="none" stroke="#000" stroke-width="0.6" stroke-opacity="0.6"/>
</g>
<polygon points="758.0,219.8 768.0,206.8 774.5,209.8 780.4,205.1 794.6,199.8 812.3,196.8 827.7,199.8 844.2,209.8 850.7,229.9 843.0,245.2 832.4,254.7 815.9,260.0 792.2,261.8 762.7,249.4 759.2,225.2" fill="#08988a" stroke="#03403a" stroke-width="0.8" stroke-opacity="0.9" stroke-linejoin="round"/>
<polyline points="766.3,225.2 772.2,214.5 780.4,210.4 795.8,203.9 811.1,201.5 826.5,205.1 839.5,214.5 843.0,226.3 839.5,238.1 830.0,247.6 814.7,254.7 793.4,256.5 767.4,244.1 766.3,225.2" fill="none" stroke="#03403a" stroke-width="0.6" stroke-opacity="0.8"/>
<polyline points="795.2,207.4 785.5,221.8" fill="none" stroke="#03403a" stroke-width="0.6" stroke-opacity="0.8"/>
<polyline points="772.2,215.7 785.5,221.8" fill="none" stroke="#03403a" stroke-width="0.6" stroke-opacity="0.8"/>
<polyline points="820.6,203.9 812.9,215.5" fill="none" stroke="#03403a" stroke-width="0.6" stroke-opacity="0.8"/>
<polyline points="830.6,222.8 843.0,227.5" fill="none" stroke="#03403a" stroke-width="0.6" stroke-opacity="0.8"/>
<polyline points="820.6,237.0 834.8,242.9" fill="none" stroke="#03403a" stroke-width="0.6" stroke-opacity="0.8"/>
<polyline points="810.5,251.7 814.7,255.9" fill="none" stroke="#03403a" stroke-width="0.6" stroke-opacity="0.8"/>
<polyline points="793.4,243.7 787.5,252.3" fill="none" stroke="#03403a" stroke-width="0.6" stroke-opacity="0.8"/>
<polyline points="775.7,235.8 766.8,232.2" fill="none" stroke="#03403a" stroke-width="0.6" stroke-opacity="0.8"/>
<polyline points="815.9,198.0 815.3,202.1" fill="none" stroke="#03403a" stroke-width="0.6" stroke-opacity="0.8"/>
<polyline points="827.7,199.8 826.5,205.1" fill="none" stroke="#03403a" stroke-width="0.6" stroke-opacity="0.8"/>
<polyline points="844.2,219.3 850.1,220.4" fill="none" stroke="#03403a" stroke-width="0.6" stroke-opacity="0.8"/>
<polyline points="774.5,249.4 776.9,254.7" fill="none" stroke="#03403a" stroke-width="0.6" stroke-opacity="0.8"/>
<polyline points="793.4,256.5 793.4,261.8" fill="none" stroke="#03403a" stroke-width="0.6" stroke-opacity="0.8"/>
<polyline points="814.7,255.3 815.9,260.0" fill="none" stroke="#03403a" stroke-width="0.6" stroke-opacity="0.8"/>
<polyline points="843.0,234.6 846.6,237.0" fill="none" stroke="#03403a" stroke-width="0.6" stroke-opacity="0.8"/>
<polyline points="832.4,206.3 839.5,214.5" fill="none" stroke="#03403a" stroke-width="0.6" stroke-opacity="0.8"/>
<polygon points="795.2,207.4 812.9,215.5 803.5,229.3 785.5,221.8" fill="#cc0000" stroke="#300" stroke-width="0.6" stroke-opacity="0.8" stroke-linejoin="round"/>
<polygon points="812.9,215.5 830.6,222.8 820.6,237.0 803.5,229.3" fill="#cc0000" stroke="#300" stroke-width="0.6" stroke-opacity="0.8" stroke-linejoin="round"/>
<polygon points="785.5,221.8 803.5,229.3 793.4,243.7 775.7,235.8" fill="#cc3800" stroke="#300" stroke-width="0.6" stroke-opacity="0.8" stroke-linejoin="round"/>
<polygon points="803.5,229.3 820.6,237.0 810.5,251.7 793.4,243.7" fill="#cc3800" stroke="#300" stroke-width="0.6" stroke-opacity="0.8" stroke-linejoin="round"/>
<polygon points="425.8,300.8 428.3,291.7 431.7,294.2 440.0,265.0 490.0,227.5 539.2,206.7 543.3,208.0 610.0,204.2 615.0,236.7 595.0,245.0 570.0,260.0 536.7,283.3 508.3,305.0 503.3,311.7 493.3,310.0 493.3,315.0 475.0,312.5" fill="#0f66de" stroke="#000" stroke-width="0.55" stroke-opacity="0.45" stroke-linejoin="round"/>
<polygon points="425.8,300.8 428.3,291.7 431.7,294.2 440.0,265.0 490.0,227.5 539.2,206.7 539.7,208.0 490.8,228.7 441.8,265.0 441.2,277.8 446.3,287.0 451.7,296.2 459.5,300.2 470.2,298.8 467.5,302.8 493.2,311.3 493.3,315.0 475.0,312.5" fill="#16c6da" stroke="#000" stroke-width="0.55" stroke-opacity="0.45" stroke-linejoin="round"/>
<polygon points="493.2,311.3 503.3,311.7 508.3,305.0 520.0,296.7 513.3,298.3 503.3,301.7" fill="#16c6da" stroke-linejoin="round"/>
<polygon points="425.8,300.8 427.0,297.0 475.8,310.3 475.0,312.5" fill="#18d8b0" stroke-linejoin="round"/>
<polygon points="450.0,269.2 492.3,230.7 542.7,209.7 606.7,206.3 607.3,235.2 567.2,254.0 543.7,270.8 499.2,299.5 462.2,285.0 453.0,275.8" fill="#0a16dc" stroke="#000" stroke-width="0.55" stroke-opacity="0.45" stroke-linejoin="round"/>
<polygon points="458.3,268.5 488.7,239.5 498.3,233.7 543.3,211.7 603.0,208.3 603.3,232.5 567.2,245.8 543.7,261.8 497.8,293.7 466.2,281.7 460.8,275.8" fill="#3c0ad6" stroke="#000" stroke-width="0.55" stroke-opacity="0.45" stroke-linejoin="round"/>
<polygon points="479.2,246.7 498.3,233.7 513.3,230.8 500.0,240.0 486.7,250.8" fill="#4a14de" stroke-linejoin="round"/>
<polygon points="464.2,269.2 470.0,263.3 485.3,249.7 498.7,238.7 512.7,233.7 512.2,228.3 545.0,213.0 600.7,210.3 601.0,229.2 567.2,242.2 543.7,258.0 497.2,289.7 472.8,280.3 466.2,276.5" fill="#780ad6" stroke="#000" stroke-width="0.55" stroke-opacity="0.45" stroke-linejoin="round"/>
<polygon points="470.0,270.8 475.0,263.3 500.0,241.7 515.0,234.7 514.2,229.2 545.0,214.2 594.3,212.2 596.3,224.5 567.2,236.7 549.5,247.5 520.0,266.3 495.8,282.2" fill="#c412ea" stroke-linejoin="round"/>
<polygon points="470.0,270.0 475.0,263.3 500.0,241.7 515.0,234.7 514.2,229.2 545.0,214.2 594.3,212.2 596.2,222.7 567.2,234.8 549.5,245.5 520.0,264.3 495.8,280.3" fill="#9600c8" stroke="#000" stroke-width="0.55" stroke-opacity="0.45" stroke-linejoin="round"/>
<polyline points="484.2,273.3 526.7,245.0 568.3,214.7" fill="none" stroke="#000" stroke-width="0.6" stroke-opacity="0.6"/>
<polyline points="476.7,265.0 490.0,273.3" fill="none" stroke="#000" stroke-width="0.6" stroke-opacity="0.6"/>
<polyline points="498.3,250.0 518.3,268.3 523.3,295.0" fill="none" stroke="#000" stroke-width="0.6" stroke-opacity="0.6"/>
<polyline points="515.8,236.3 538.3,255.3 551.7,273.3" fill="none" stroke="#000" stroke-width="0.6" stroke-opacity="0.6"/>
<polyline points="535.0,224.2 556.7,241.7 576.7,256.7" fill="none" stroke="#000" stroke-width="0.6" stroke-opacity="0.6"/>
<polyline points="558.3,215.0 580.0,229.2 600.0,243.3" fill="none" stroke="#000" stroke-width="0.6" stroke-opacity="0.6"/>
<polyline points="500.0,241.7 526.7,227.5 558.3,215.0" fill="none" stroke="#000" stroke-width="0.6" stroke-opacity="0.6"/>
<polyline points="495.8,280.3 498.3,301.7" fill="none" stroke="#000" stroke-width="0.6" stroke-opacity="0.6"/>
<polyline points="440.0,265.0 450.0,269.2" fill="none" stroke="#000" stroke-width="0.6" stroke-opacity="0.6"/>
<polyline points="431.7,294.2 453.0,275.8" fill="none" stroke="#000" stroke-width="0.6" stroke-opacity="0.6"/>
<polyline points="459.5,300.2 450.0,305.0" fill="none" stroke="#000" stroke-width="0.6" stroke-opacity="0.6"/>
<polyline points="470.2,298.8 475.0,312.5" fill="none" stroke="#000" stroke-width="0.6" stroke-opacity="0.6"/>
<polyline points="486.7,305.0 493.3,310.0" fill="none" stroke="#000" stroke-width="0.6" stroke-opacity="0.6"/>
<polyline points="596.2,222.7 615.0,236.7" fill="none" stroke="#000" stroke-width="0.6" stroke-opacity="0.6"/>
<polyline points="594.3,212.2 610.0,204.2" fill="none" stroke="#000" stroke-width="0.6" stroke-opacity="0.6"/>
<polyline points="601.0,220.0 613.3,223.3" fill="none" stroke="#000" stroke-width="0.6" stroke-opacity="0.6"/>
<polyline points="462.2,285.0 470.0,270.0" fill="none" stroke="#000" stroke-width="0.6" stroke-opacity="0.6"/>
<polygon points="251.1,484.3 261.3,467.0 261.3,461.9 265.4,460.9 299.1,431.3 306.2,424.1 340.9,448.6 343.0,451.7 360.3,464.9 355.2,493.5 362.3,509.8 368.5,508.8 377.7,540.4 361.3,548.6 286.8,559.8 271.5,542.5 253.2,495.6" fill="#12d084" stroke="#000" stroke-width="0.55" stroke-opacity="0.45" stroke-linejoin="round"/>
<polygon points="251.9,487.4 261.7,467.0 299.7,431.9 306.2,425.3 339.3,448.6 357.2,465.3 352.3,493.1 359.7,510.9 365.4,510.2 369.9,535.3 359.7,542.9 288.3,553.1 274.0,540.4 253.6,495.6" fill="#14ccb0" stroke="#000" stroke-width="0.55" stroke-opacity="0.45" stroke-linejoin="round"/>
<polygon points="251.1,484.3 261.3,467.0 261.3,461.9 265.4,460.9 299.1,431.3 306.2,424.1 337.9,447.8 354.2,466.0 349.5,492.5 357.2,511.9 361.7,530.2 358.3,538.4 289.5,548.6 275.6,538.4 254.2,495.6" fill="#16c6da" stroke="#000" stroke-width="0.55" stroke-opacity="0.45" stroke-linejoin="round"/>
<polygon points="251.7,484.7 261.7,467.0 262.1,462.5 265.4,461.3 299.3,431.9 306.2,424.7 335.8,448.6 348.1,466.0 344.6,492.5 351.1,513.9 354.2,529.2 324.6,533.3 323.6,538.8 292.3,542.9 278.7,533.3 257.2,499.6" fill="#1268d8" stroke="#000" stroke-width="0.55" stroke-opacity="0.45" stroke-linejoin="round"/>
<polygon points="263.8,485.8 267.9,469.4 302.1,437.2 306.2,431.5 331.7,450.7 341.9,467.0 339.3,491.5 347.0,513.9 345.0,525.1 298.1,530.2 284.8,526.2 269.5,503.7" fill="#0a16dc" stroke="#000" stroke-width="0.55" stroke-opacity="0.45" stroke-linejoin="round"/>
<polygon points="275.6,485.3 275.6,471.5 303.0,440.0 306.2,434.3 329.7,452.7 335.8,468.0 333.8,491.5 341.9,512.9 339.9,520.0 300.1,524.1 291.9,518.0 280.7,499.6" fill="#3c0ad6" stroke="#000" stroke-width="0.55" stroke-opacity="0.45" stroke-linejoin="round"/>
<polygon points="285.8,483.3 281.7,472.1 303.8,442.1 306.2,436.8 327.7,455.8 332.8,469.0 330.3,491.5 337.9,510.9 301.1,518.0 289.9,499.6" fill="#780ad6" stroke="#000" stroke-width="0.55" stroke-opacity="0.45" stroke-linejoin="round"/>
<polygon points="304.2,513.9 334.8,509.8 335.4,512.5 303.8,516.8" fill="#c412ea" stroke-linejoin="round"/>
<polygon points="282.8,474.1 285.8,466.6 305.2,440.4 326.6,458.8 329.7,471.1 326.6,492.5 334.8,509.8 304.2,513.9 291.9,490.4" fill="#9600c8" stroke="#000" stroke-width="0.55" stroke-opacity="0.45" stroke-linejoin="round"/>
<polyline points="285.8,466.6 300.1,463.3 326.6,458.8" fill="none" stroke="#000" stroke-width="0.6" stroke-opacity="0.6"/>
<polyline points="282.8,474.1 291.9,479.2 306.2,477.2 329.1,474.1" fill="none" stroke="#000" stroke-width="0.6" stroke-opacity="0.6"/>
<polyline points="291.9,490.4 310.3,495.6 326.6,492.5" fill="none" stroke="#000" stroke-width="0.6" stroke-opacity="0.6"/>
<polyline points="305.2,440.4 300.1,463.3 306.2,477.2 310.3,495.6 316.4,512.3" fill="none" stroke="#000" stroke-width="0.6" stroke-opacity="0.6"/>
<polyline points="304.2,513.9 299.1,532.3 300.1,558.8" fill="none" stroke="#000" stroke-width="0.6" stroke-opacity="0.6"/>
<polyline points="316.4,512.3 317.4,532.3 319.5,556.8" fill="none" stroke="#000" stroke-width="0.6" stroke-opacity="0.6"/>
<polyline points="334.8,509.8 337.9,532.3 340.9,551.7" fill="none" stroke="#000" stroke-width="0.6" stroke-opacity="0.6"/>
<polyline points="253.2,495.6 277.7,495.6" fill="none" stroke="#000" stroke-width="0.6" stroke-opacity="0.6"/>
<polyline points="261.3,467.0 280.7,469.0" fill="none" stroke="#000" stroke-width="0.6" stroke-opacity="0.6"/>
<polyline points="265.4,513.9 285.8,509.8" fill="none" stroke="#000" stroke-width="0.6" stroke-opacity="0.6"/>
<polyline points="271.5,542.5 291.9,532.3" fill="none" stroke="#000" stroke-width="0.6" stroke-opacity="0.6"/>
<polyline points="329.7,471.1 359.3,473.1" fill="none" stroke="#000" stroke-width="0.6" stroke-opacity="0.6"/>
<polyline points="326.6,492.5 355.2,493.5" fill="none" stroke="#000" stroke-width="0.6" stroke-opacity="0.6"/>
<polyline points="341.9,512.9 362.3,509.8" fill="none" stroke="#000" stroke-width="0.6" stroke-opacity="0.6"/>
<polyline points="288.9,552.7 359.3,541.5" fill="none" stroke="#000" stroke-width="0.6" stroke-opacity="0.6"/>
<polyline points="291.9,545.6 323.6,540.4" fill="none" stroke="#000" stroke-width="0.6" stroke-opacity="0.6"/>
<polyline points="251.1,484.3 267.4,483.3" fill="none" stroke="#000" stroke-width="0.6" stroke-opacity="0.6"/>
<polygon points="580.0,310.8 621.7,305.8 638.3,308.3 653.3,315.0 666.7,325.0 675.0,336.7 677.5,345.0 678.3,358.3 673.3,370.0 660.0,385.0 643.3,396.7 626.7,403.3 603.3,405.8 581.7,408.3 570.0,410.0 571.7,408.3 558.3,413.3 540.0,425.0 523.3,443.3 508.3,458.3 493.3,465.8 480.0,461.7 473.3,451.7 472.5,440.0 478.3,423.3 486.7,406.7 497.5,393.7 491.7,387.5 513.3,363.0 516.8,360.3 510.3,356.8 536.9,338.0 540.0,337.5 580.0,317.0" fill="#1a9008" stroke="#052a02" stroke-width="0.8" stroke-opacity="0.9" stroke-linejoin="round"/>
<polygon points="594.2,333.3 622.5,325.8 628.3,340.0 600.8,347.5" fill="#08a096" stroke-linejoin="round"/>
<polygon points="626.7,332.5 645.8,327.5 652.5,321.7 660.0,325.0 667.5,337.5 633.3,347.0" fill="#08a096" stroke-linejoin="round"/>
<polygon points="660.0,323.3 669.2,326.7 676.7,343.3 678.3,358.3 673.3,370.0 669.2,367.5 672.5,356.7 670.8,343.3 666.7,335.8" fill="#08a096" stroke-linejoin="round"/>
<polygon points="609.2,365.8 637.5,357.5 645.0,375.0 616.7,383.0" fill="#cccc00" stroke-linejoin="round"/>
<polygon points="524.5,349.8 536.9,338.3 535.1,346.8 552.2,353.9 553.6,357.2 540.4,351.8 526.3,351.1" fill="#08a096" stroke-linejoin="round"/>
<polygon points="543.3,400.0 553.3,409.2 532.5,428.3 522.5,420.8" fill="#08a096" stroke-linejoin="round"/>
<polygon points="478.3,423.3 484.2,425.8 480.0,440.0 490.0,442.5 506.7,453.3 520.0,440.0 524.2,441.7 508.3,458.3 493.3,465.8 480.0,461.7 473.3,451.7 472.5,440.0" fill="#08a096" stroke-linejoin="round"/>
<polyline points="581.7,316.7 600.8,312.5 620.0,310.8 638.3,312.5 652.5,318.3 663.3,328.3 670.8,343.3 672.5,356.7 669.2,367.5 658.3,381.7" fill="none" stroke="#052a02" stroke-width="0.7" stroke-opacity="0.8"/>
<polyline points="600.8,308.3 600.8,312.5" fill="none" stroke="#052a02" stroke-width="0.7" stroke-opacity="0.8"/>
<polyline points="620.0,305.8 620.0,310.8" fill="none" stroke="#052a02" stroke-width="0.7" stroke-opacity="0.8"/>
<polyline points="641.7,310.8 640.0,315.0" fill="none" stroke="#052a02" stroke-width="0.7" stroke-opacity="0.8"/>
<polyline points="620.0,310.8 626.7,332.5 633.3,346.7 643.3,363.3 646.7,375.0 660.0,385.0" fill="none" stroke="#052a02" stroke-width="0.7" stroke-opacity="0.8"/>
<polyline points="582.5,318.3 587.5,330.0 594.2,333.3 600.8,347.5 609.2,365.8 616.7,383.0 625.0,401.7" fill="none" stroke="#052a02" stroke-width="0.7" stroke-opacity="0.8"/>
<polyline points="553.3,328.3 587.5,324.2 622.5,325.8" fill="none" stroke="#052a02" stroke-width="0.7" stroke-opacity="0.8"/>
<polyline points="556.7,341.7 594.2,333.3" fill="none" stroke="#052a02" stroke-width="0.7" stroke-opacity="0.8"/>
<polyline points="560.0,358.3 600.8,347.5 628.3,340.0 667.5,337.5" fill="none" stroke="#052a02" stroke-width="0.7" stroke-opacity="0.8"/>
<polyline points="565.0,373.3 609.2,365.8" fill="none" stroke="#052a02" stroke-width="0.7" stroke-opacity="0.8"/>
<polyline points="637.5,357.5 672.5,354.2" fill="none" stroke="#052a02" stroke-width="0.7" stroke-opacity="0.8"/>
<polyline points="581.7,392.5 616.7,383.0 645.0,375.0" fill="none" stroke="#052a02" stroke-width="0.7" stroke-opacity="0.8"/>
<polyline points="643.3,396.7 646.7,375.0" fill="none" stroke="#052a02" stroke-width="0.7" stroke-opacity="0.8"/>
<polyline points="603.3,405.8 604.2,401.7" fill="none" stroke="#052a02" stroke-width="0.7" stroke-opacity="0.8"/>
<polyline points="500.8,394.2 491.7,411.7 485.0,425.0 480.0,440.0 478.3,450.0 483.3,456.7 493.3,460.0 505.0,454.2 520.0,440.0 536.7,423.3 555.0,411.7" fill="none" stroke="#052a02" stroke-width="0.7" stroke-opacity="0.8"/>
<polyline points="515.0,371.7 530.0,385.8 513.3,401.7 506.7,412.5 497.5,428.3 491.7,438.3 483.3,456.7" fill="none" stroke="#052a02" stroke-width="0.7" stroke-opacity="0.8"/>
<polyline points="516.7,366.7 540.0,364.2 556.7,371.7 565.0,386.7 565.8,403.3 560.0,411.7" fill="none" stroke="#052a02" stroke-width="0.7" stroke-opacity="0.8"/>
<polyline points="530.0,385.8 538.3,391.7 553.3,378.3" fill="none" stroke="#052a02" stroke-width="0.7" stroke-opacity="0.8"/>
<polyline points="538.3,391.7 543.3,400.0" fill="none" stroke="#052a02" stroke-width="0.7" stroke-opacity="0.8"/>
<polyline points="486.7,406.7 491.7,411.7 506.7,412.5 522.5,420.8" fill="none" stroke="#052a02" stroke-width="0.7" stroke-opacity="0.8"/>
<polyline points="481.7,421.7 497.5,428.3 518.3,439.2" fill="none" stroke="#052a02" stroke-width="0.7" stroke-opacity="0.8"/>
<polyline points="480.0,440.0 491.7,438.3 506.7,453.3" fill="none" stroke="#052a02" stroke-width="0.7" stroke-opacity="0.8"/>
<polyline points="493.3,460.0 493.3,465.8" fill="none" stroke="#052a02" stroke-width="0.7" stroke-opacity="0.8"/>
<polyline points="473.3,451.7 478.3,450.0" fill="none" stroke="#052a02" stroke-width="0.7" stroke-opacity="0.8"/>
<polyline points="553.3,409.2 558.3,413.3" fill="none" stroke="#052a02" stroke-width="0.7" stroke-opacity="0.8"/>
<polyline points="513.3,401.7 500.8,394.2" fill="none" stroke="#052a02" stroke-width="0.7" stroke-opacity="0.8"/>
<polygon points="510.3,356.8 511.2,356.4 512.4,355.8 513.8,355.1 515.4,354.3 517.1,353.5 518.9,352.7 520.8,352.0 522.7,351.5 524.7,351.1 526.8,350.8 529.1,350.5 531.5,350.2 533.8,350.1 536.1,350.0 538.3,350.1 540.4,350.3 542.4,350.7 544.2,351.2 546.0,351.8 547.7,352.6 549.4,353.4 551.1,354.3 552.8,355.2 554.6,356.3 556.4,357.3 558.2,358.5 560.1,359.8 562.0,361.1 563.8,362.5 565.5,363.9 567.2,365.4 568.8,366.9 570.2,368.4 571.6,370.0 572.9,371.6 574.2,373.3 575.3,375.0 576.4,376.6 577.4,378.3 578.2,379.9 578.9,381.4 579.5,382.8 579.9,384.1 580.3,385.5 580.5,386.9 580.8,388.4 581.0,389.9 581.2,391.7 581.3,393.7 581.4,396.0 581.4,398.5 581.3,401.0 581.3,403.4 581.2,405.6 581.2,407.4 581.2,408.8 572.9,408.8 572.9,408.0 572.8,407.0 572.8,405.8 572.7,404.4 572.7,403.0 572.6,401.5 572.5,400.1 572.3,398.8 572.1,397.5 571.9,396.2 571.7,394.9 571.5,393.6 571.2,392.3 570.9,391.0 570.5,389.6 569.9,388.1 569.3,386.6 568.6,385.0 567.8,383.3 566.9,381.6 566.0,379.9 565.0,378.3 563.9,376.7 562.9,375.1 561.7,373.7 560.5,372.2 559.2,370.8 557.8,369.4 556.5,368.1 555.0,366.8 553.6,365.6 552.2,364.5 550.8,363.5 549.4,362.6 548.0,361.7 546.5,360.9 545.1,360.2 543.6,359.6 542.0,359.1 540.4,358.6 538.7,358.2 537.0,358.0 535.2,357.8 533.4,357.7 531.5,357.6 529.7,357.7 528.0,357.8 526.3,358.0 524.5,358.4 522.7,358.9 520.9,359.6 519.2,360.3 517.5,361.1 516.0,361.8 514.8,362.3 513.9,362.7" fill="#15800a" stroke-linejoin="round"/>
<polyline points="510.3,356.8 511.2,356.4 512.4,355.8 513.8,355.1 515.4,354.3 517.1,353.5 518.9,352.7 520.8,352.0 522.7,351.5 524.7,351.1 526.8,350.8 529.1,350.5 531.5,350.2 533.8,350.1 536.1,350.0 538.3,350.1 540.4,350.3 542.4,350.7 544.2,351.2 546.0,351.8 547.7,352.6 549.4,353.4 551.1,354.3 552.8,355.2 554.6,356.3 556.4,357.3 558.2,358.5 560.1,359.8 562.0,361.1 563.8,362.5 565.5,363.9 567.2,365.4 568.8,366.9 570.2,368.4 571.6,370.0 572.9,371.6 574.2,373.3 575.3,375.0 576.4,376.6 577.4,378.3 578.2,379.9 578.9,381.4 579.5,382.8 579.9,384.1 580.3,385.5 580.5,386.9 580.8,388.4 581.0,389.9 581.2,391.7 581.3,393.7 581.4,396.0 581.4,398.5 581.3,401.0 581.3,403.4 581.2,405.6 581.2,407.4 581.2,408.8" fill="none" stroke="#053203" stroke-width="0.9" stroke-opacity="0.85"/>
<polyline points="511.0,358.0 511.9,357.6 513.1,357.0 514.6,356.3 516.2,355.5 517.9,354.7 519.7,353.9 521.6,353.3 523.4,352.8 525.3,352.5 527.4,352.2 529.6,351.9 531.8,351.7 534.1,351.6 536.3,351.6 538.4,351.8 540.4,352.0 542.3,352.4 544.1,352.9 545.8,353.5 547.5,354.2 549.1,355.0 550.8,355.9 552.4,356.9 554.1,357.9 555.8,359.0 557.6,360.2 559.4,361.4 561.1,362.8 562.9,364.2 564.5,365.6 566.1,367.1 567.6,368.5 569.0,370.1 570.3,371.6 571.5,373.3 572.7,375.0 573.8,376.6 574.8,378.3 575.7,379.9 576.5,381.5 577.2,383.0 577.8,384.4 578.2,385.8 578.5,387.1 578.8,388.5 579.0,389.9 579.2,391.5 579.4,393.1 579.5,395.0 579.6,397.1 579.6,399.4 579.6,401.7 579.6,403.9 579.5,405.9 579.5,407.6 579.5,408.8" fill="none" stroke="#053203" stroke-width="0.9" stroke-opacity="0.85"/>
<polyline points="511.7,359.2 512.7,358.8 513.9,358.2 515.3,357.5 516.9,356.7 518.6,355.9 520.5,355.2 522.3,354.6 524.1,354.1 526.0,353.8 528.0,353.5 530.1,353.3 532.2,353.2 534.4,353.2 536.5,353.2 538.5,353.4 540.4,353.7 542.2,354.1 544.0,354.6 545.6,355.2 547.3,355.9 548.9,356.7 550.4,357.6 552.0,358.5 553.6,359.6 555.3,360.6 557.0,361.8 558.6,363.1 560.3,364.4 561.9,365.8 563.5,367.2 565.0,368.7 566.4,370.2 567.7,371.7 569.0,373.3 570.1,375.0 571.3,376.6 572.3,378.3 573.3,380.0 574.1,381.6 574.9,383.2 575.5,384.6 576.0,386.1 576.4,387.4 576.8,388.8 577.0,390.1 577.2,391.5 577.4,393.0 577.6,394.5 577.8,396.2 577.8,398.2 577.9,400.3 577.9,402.4 577.9,404.3 577.9,406.2 577.8,407.7 577.8,408.8" fill="none" stroke="#053203" stroke-width="0.9" stroke-opacity="0.85"/>
<polyline points="512.4,360.4 513.4,360.0 514.6,359.4 516.0,358.7 517.7,357.9 519.4,357.1 521.2,356.4 523.0,355.8 524.8,355.4 526.6,355.1 528.6,354.9 530.6,354.8 532.6,354.7 534.6,354.7 536.6,354.8 538.6,355.0 540.4,355.3 542.2,355.7 543.8,356.2 545.4,356.9 547.0,357.6 548.6,358.4 550.1,359.3 551.6,360.2 553.2,361.2 554.7,362.3 556.3,363.5 557.9,364.7 559.5,366.1 561.0,367.5 562.5,368.9 563.9,370.4 565.2,371.8 566.4,373.4 567.6,375.0 568.8,376.6 569.8,378.3 570.8,380.0 571.7,381.7 572.5,383.3 573.2,384.8 573.8,386.3 574.3,387.7 574.7,389.0 575.0,390.4 575.3,391.7 575.5,393.1 575.7,394.5 575.8,395.9 576.0,397.5 576.1,399.3 576.2,401.2 576.2,403.0 576.2,404.8 576.2,406.4 576.2,407.8 576.2,408.8" fill="none" stroke="#053203" stroke-width="0.9" stroke-opacity="0.85"/>
<polyline points="513.1,361.6 514.1,361.2 515.3,360.6 516.8,359.9 518.4,359.1 520.2,358.4 522.0,357.7 523.8,357.1 525.5,356.7 527.3,356.5 529.1,356.3 531.1,356.2 533.0,356.2 534.9,356.2 536.8,356.4 538.7,356.6 540.4,357.0 542.1,357.4 543.7,357.9 545.3,358.6 546.8,359.3 548.3,360.1 549.8,360.9 551.2,361.9 552.7,362.9 554.2,363.9 555.7,365.1 557.2,366.4 558.7,367.7 560.1,369.1 561.5,370.6 562.8,372.0 564.0,373.5 565.2,375.0 566.3,376.6 567.4,378.3 568.4,380.0 569.3,381.7 570.1,383.3 570.9,384.9 571.6,386.5 572.2,387.9 572.6,389.3 573.0,390.7 573.3,392.0 573.5,393.3 573.7,394.6 573.9,396.0 574.1,397.3 574.2,398.8 574.3,400.4 574.4,402.1 574.5,403.7 574.5,405.3 574.5,406.7 574.5,407.9 574.5,408.8" fill="none" stroke="#053203" stroke-width="0.9" stroke-opacity="0.85"/>
<polyline points="513.9,362.7 514.8,362.3 516.0,361.8 517.5,361.1 519.2,360.3 520.9,359.6 522.7,358.9 524.5,358.4 526.3,358.0 528.0,357.8 529.7,357.7 531.5,357.6 533.4,357.7 535.2,357.8 537.0,358.0 538.7,358.2 540.4,358.6 542.0,359.1 543.6,359.6 545.1,360.2 546.5,360.9 548.0,361.7 549.4,362.6 550.8,363.5 552.2,364.5 553.6,365.6 555.0,366.8 556.5,368.1 557.8,369.4 559.2,370.8 560.5,372.2 561.7,373.7 562.9,375.1 563.9,376.7 565.0,378.3 566.0,379.9 566.9,381.6 567.8,383.3 568.6,385.0 569.3,386.6 569.9,388.1 570.5,389.6 570.9,391.0 571.2,392.3 571.5,393.6 571.7,394.9 571.9,396.2 572.1,397.5 572.3,398.8 572.5,400.1 572.6,401.5 572.7,403.0 572.7,404.4 572.8,405.8 572.8,407.0 572.9,408.0 572.9,408.8" fill="none" stroke="#053203" stroke-width="0.9" stroke-opacity="0.85"/>
<polygon points="430.6,536.9 433.8,527.5 445.0,518.8 458.8,515.6 473.8,515.6 488.8,518.8 507.5,526.9 526.2,534.4 542.5,542.5 552.5,552.5 556.2,562.5 552.5,572.5 542.5,580.0 530.0,584.4 517.5,583.8 500.0,580.0 475.0,572.5 451.2,566.2 453.1,560.6 456.2,557.5 445.0,552.5 435.0,545.0" fill="#08988a" stroke="#03403a" stroke-width="0.8" stroke-opacity="0.9" stroke-linejoin="round"/>
<polyline points="436.9,538.8 440.0,530.0 448.8,523.1 461.2,520.0 473.8,520.0 487.5,523.1 506.2,531.2 525.0,538.8 540.0,546.2 547.5,552.5 550.0,561.2 547.5,568.8 543.1,572.5 536.2,577.5 528.8,580.0 518.8,578.8 500.0,575.6 478.8,568.8" fill="none" stroke="#03403a" stroke-width="0.6" stroke-opacity="0.8"/>
<polyline points="461.2,520.0 453.8,533.8 443.8,547.5" fill="none" stroke="#03403a" stroke-width="0.6" stroke-opacity="0.8"/>
<polyline points="485.0,522.5 476.2,536.2 470.0,541.9" fill="none" stroke="#03403a" stroke-width="0.6" stroke-opacity="0.8"/>
<polyline points="440.0,528.8 453.8,533.8 476.2,536.2 490.6,548.8" fill="none" stroke="#03403a" stroke-width="0.6" stroke-opacity="0.8"/>
<polyline points="506.2,531.2 500.0,535.0" fill="none" stroke="#03403a" stroke-width="0.6" stroke-opacity="0.8"/>
<polyline points="525.0,538.8 521.9,536.9" fill="none" stroke="#03403a" stroke-width="0.6" stroke-opacity="0.8"/>
<polyline points="467.5,516.2 467.5,520.0" fill="none" stroke="#03403a" stroke-width="0.6" stroke-opacity="0.8"/>
<polyline points="488.8,518.8 487.5,523.1" fill="none" stroke="#03403a" stroke-width="0.6" stroke-opacity="0.8"/>
<polyline points="507.5,526.9 506.2,531.2" fill="none" stroke="#03403a" stroke-width="0.6" stroke-opacity="0.8"/>
<polyline points="526.2,534.4 525.0,538.8" fill="none" stroke="#03403a" stroke-width="0.6" stroke-opacity="0.8"/>
<polyline points="542.5,542.5 540.0,546.2" fill="none" stroke="#03403a" stroke-width="0.6" stroke-opacity="0.8"/>
<polyline points="550.0,557.5 555.6,557.5" fill="none" stroke="#03403a" stroke-width="0.6" stroke-opacity="0.8"/>
<polyline points="547.5,568.8 552.5,572.5" fill="none" stroke="#03403a" stroke-width="0.6" stroke-opacity="0.8"/>
<polyline points="530.0,580.0 530.0,584.4" fill="none" stroke="#03403a" stroke-width="0.6" stroke-opacity="0.8"/>
<polyline points="510.0,577.5 509.4,581.9" fill="none" stroke="#03403a" stroke-width="0.6" stroke-opacity="0.8"/>
<polyline points="490.0,573.8 489.4,577.5" fill="none" stroke="#03403a" stroke-width="0.6" stroke-opacity="0.8"/>
<polyline points="475.0,568.8 475.0,572.5" fill="none" stroke="#03403a" stroke-width="0.6" stroke-opacity="0.8"/>
<polyline points="433.8,532.5 438.8,533.8" fill="none" stroke="#03403a" stroke-width="0.6" stroke-opacity="0.8"/>
<polyline points="435.0,545.0 440.0,547.5 443.8,547.5 456.2,557.5" fill="none" stroke="#03403a" stroke-width="0.6" stroke-opacity="0.8"/>
<polyline points="445.0,518.8 448.8,523.1" fill="none" stroke="#03403a" stroke-width="0.6" stroke-opacity="0.8"/>
<polyline points="517.5,578.1 526.2,565.0" fill="none" stroke="#03403a" stroke-width="0.6" stroke-opacity="0.8"/>
<polygon points="521.9,536.9 540.0,545.6 535.6,550.6 517.5,543.1" fill="#1a9008" stroke="#222" stroke-width="0.5" stroke-opacity="0.6" stroke-linejoin="round"/>
<polygon points="540.0,545.6 547.5,552.5 550.0,561.2 547.5,568.8 543.1,572.5 526.2,565.0 535.6,550.6" fill="#1a9008" stroke="#222" stroke-width="0.5" stroke-opacity="0.6" stroke-linejoin="round"/>
<polygon points="470.0,541.9 489.4,549.4 485.6,554.4 466.9,547.5" fill="#cccc00" stroke="#222" stroke-width="0.5" stroke-opacity="0.6" stroke-linejoin="round"/>
<polygon points="466.9,547.5 485.6,554.4 481.9,560.6 463.1,553.8" fill="#d89a00" stroke="#222" stroke-width="0.5" stroke-opacity="0.6" stroke-linejoin="round"/>
<polygon points="463.1,553.8 481.9,560.6 478.8,565.6 458.8,560.0" fill="#1a9008" stroke="#222" stroke-width="0.5" stroke-opacity="0.6" stroke-linejoin="round"/>
<polygon points="500.0,535.0 517.5,543.1 508.1,556.9 490.6,548.8" fill="#cc3800" stroke="#222" stroke-width="0.5" stroke-opacity="0.6" stroke-linejoin="round"/>
<polygon points="517.5,543.1 535.6,550.6 526.2,565.0 508.1,556.9" fill="#cc00aa" stroke="#222" stroke-width="0.5" stroke-opacity="0.6" stroke-linejoin="round"/>
<polygon points="490.6,549.4 508.1,556.9 496.9,573.8 478.1,568.1" fill="#cccc00" stroke="#222" stroke-width="0.5" stroke-opacity="0.6" stroke-linejoin="round"/>
<polygon points="508.1,556.9 526.2,565.0 517.5,578.1 496.9,573.8" fill="#1a9008" stroke="#222" stroke-width="0.5" stroke-opacity="0.6" stroke-linejoin="round"/>
<defs><radialGradient id="sung" cx="0.55" cy="0.4" r="0.6"><stop offset="0" stop-color="#ffe860"/><stop offset="1" stop-color="#ffd000"/></radialGradient><clipPath id="vpclip"><rect x="236.5" y="101.5" width="688" height="578"/></clipPath></defs>
<g clip-path="url(#vpclip)"><polygon points="938.3,113.3 930.0,115.1 934.4,122.4 926.3,119.8 926.4,128.2 920.8,121.9 916.7,129.3 914.9,121.0 907.6,125.4 910.2,117.3 901.8,117.4 908.1,111.8 900.7,107.7 909.0,105.9 904.6,98.6 912.7,101.2 912.6,92.8 918.2,99.1 922.3,91.7 924.1,100.0 931.4,95.6 928.8,103.7 937.2,103.6 930.9,109.2" fill="url(#sung)" stroke="#e8b800" stroke-width="0.5" stroke-opacity="0.8" stroke-linejoin="round"/></g>
<polygon points="870.2,147.5 889.2,147.5 889.9,160.6 870.2,160.6" fill="#a2a2a2" stroke-linejoin="round"/>
<polygon points="870.2,132.2 889.2,132.2 889.2,148.5 870.2,148.5" fill="#b9b9b9" stroke-linejoin="round"/>
<ellipse cx="879.3" cy="122.5" rx="6.2" ry="3.6" fill="#f04a14"/>
<circle cx="879.7" cy="126.8" r="6.3" fill="#10131c"/>
<polygon points="875.3,133.2 883.3,133.2 879.3,138.0" fill="#3c78dc" stroke-linejoin="round"/>
<text x="879.8" y="130.6" font-family="Liberation Sans,sans-serif" font-weight="bold" font-size="10.5" fill="#f0f0f0" text-anchor="middle">Z</text>
<polygon points="849.1,140.5 849.1,153.0 865.5,146.8" fill="#8acc14" stroke-linejoin="round"/>
<polygon points="849.1,146.8 849.1,153.0 865.5,146.8" fill="#6aa80e" stroke-linejoin="round"/>
<text x="843.5" y="151.3" font-family="Liberation Sans,sans-serif" font-weight="bold" font-size="11.5" fill="#3ce070" text-anchor="middle">Y</text>
<polygon points="893.5,146.0 909.9,139.9 909.9,152.8" fill="#6e6e6e" stroke-linejoin="round"/>
<polygon points="879.3,158.0 872.8,168.6 885.5,168.6" fill="#5c5c5c" stroke-linejoin="round"/>
<ellipse cx="879.8" cy="170.8" rx="6.6" ry="3.9" fill="#0a0a0a"/>
<rect x="414.2" y="647.3" width="331.40000000000003" height="10.200000000000045" fill="#fff"/>
<rect x="414.2" y="652.4" width="41.4" height="5.1" fill="#6a6a6a"/>
<rect x="455.6" y="647.3" width="41.4" height="5.1" fill="#6a6a6a"/>
<rect x="497.1" y="652.4" width="41.4" height="5.1" fill="#6a6a6a"/>
<rect x="538.5" y="647.3" width="41.4" height="5.1" fill="#6a6a6a"/>
<rect x="579.9" y="652.4" width="41.4" height="5.1" fill="#6a6a6a"/>
<rect x="621.3" y="647.3" width="41.4" height="5.1" fill="#6a6a6a"/>
<rect x="662.8" y="652.4" width="41.4" height="5.1" fill="#6a6a6a"/>
<rect x="704.2" y="647.3" width="41.4" height="5.1" fill="#6a6a6a"/>
<path d="M414.2 647.3H745.6M414.2 657.5H745.6M414.2 647.3V657.5M745.6 647.3V657.5" stroke="#000" stroke-width="1"/>
<text x="414.2" y="645.9" font-family="DejaVu Sans,Liberation Sans,sans-serif" font-size="9.6" fill="#000" text-anchor="middle">0</text>
<text x="455.6" y="645.9" font-family="DejaVu Sans,Liberation Sans,sans-serif" font-size="9.6" fill="#000" text-anchor="middle">200</text>
<text x="497.1" y="645.9" font-family="DejaVu Sans,Liberation Sans,sans-serif" font-size="9.6" fill="#000" text-anchor="middle">400</text>
<text x="538.5" y="645.9" font-family="DejaVu Sans,Liberation Sans,sans-serif" font-size="9.6" fill="#000" text-anchor="middle">600</text>
<text x="579.9" y="645.9" font-family="DejaVu Sans,Liberation Sans,sans-serif" font-size="9.6" fill="#000" text-anchor="middle">800</text>
<text x="621.3" y="645.9" font-family="DejaVu Sans,Liberation Sans,sans-serif" font-size="9.6" fill="#000" text-anchor="middle">1000</text>
<text x="662.8" y="645.9" font-family="DejaVu Sans,Liberation Sans,sans-serif" font-size="9.6" fill="#000" text-anchor="middle">1200</text>
<text x="704.2" y="645.9" font-family="DejaVu Sans,Liberation Sans,sans-serif" font-size="9.6" fill="#000" text-anchor="middle">1400</text>
<text x="745.6" y="645.9" font-family="DejaVu Sans,Liberation Sans,sans-serif" font-size="9.6" fill="#000" text-anchor="middle">1600</text>
<text x="238.5" y="677.6" font-family="DejaVu Sans,Liberation Sans,sans-serif" font-size="7.2" fill="#2a2a2a" textLength="80" lengthAdjust="spacingAndGlyphs">98 fps | 10.200 ms/f</text>
<text x="602" y="677.6" font-family="DejaVu Sans,Liberation Sans,sans-serif" font-size="7.2" fill="#2a2a2a" textLength="321" lengthAdjust="spacingAndGlyphs">NVIDIA Corporation GeForce GTX 970M/PCIe/SSE2 | OpenGL v4.6.0 NVIDIA 419.17</text>
<rect x="237.3" y="102.2" width="686.5" height="576.5" fill="none" stroke="#262626" stroke-width="1.6" stroke-dasharray="4.2 2.97"/>
<path d="M653.16 102.2H748" stroke="#8af0c0" stroke-width="1.6" stroke-dasharray="4.2 2.97" fill="none"/>
<path d="M775.05 102.2H884" stroke="#9af0a8" stroke-width="1.6" stroke-dasharray="4.2 2.97" fill="none"/>
<path d="M904.11 102.2H923.8" stroke="#2a4ee0" stroke-width="1.6" stroke-dasharray="4.2 2.97" fill="none"/>
<path d="M923.8 102.2V128" stroke="#2a4ee0" stroke-width="1.6" stroke-dasharray="4.2 2.97" fill="none" stroke-dashoffset="-5.35"/></svg>
</body></html>
